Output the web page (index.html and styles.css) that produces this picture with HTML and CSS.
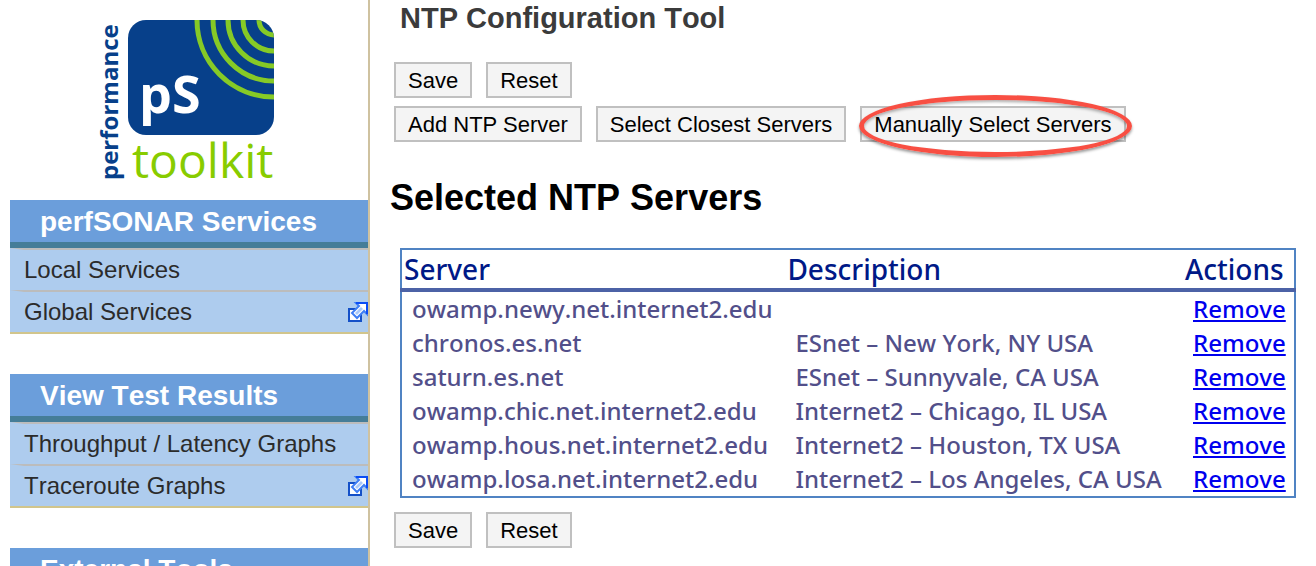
FILE: index.html
```html
<!DOCTYPE html>
<html lang="en">
<head>
<meta charset="utf-8">
<title>NTP Configuration Tool</title>
<link rel="stylesheet" href="styles.css">
</head>
<body>
<div class="page">
  <aside class="sidebar">
    <svg class="logo" viewBox="-20 0 210 200" role="img" aria-label="perfSONAR performance toolkit">
      <defs>
        <clipPath id="badge"><rect x="28" y="20" width="146" height="115" rx="18"/></clipPath>
      </defs>
      <g clip-path="url(#badge)">
        <rect x="28" y="20" width="146" height="115" fill="#07408a"/>
        <g fill="none" stroke="#86ca26" stroke-width="5">
          <circle cx="174" cy="20" r="15"/>
          <circle cx="174" cy="20" r="31"/>
          <circle cx="174" cy="20" r="46"/>
          <circle cx="174" cy="20" r="61"/>
          <circle cx="174" cy="20" r="77"/>
        </g>
      </g>
      <text class="logo-ps" x="39" y="113">pS</text>
      <text class="logo-toolkit" x="32" y="178">toolkit</text>
      <text class="logo-performance" transform="translate(18 180) rotate(-90)">performance</text>
    </svg>
    <nav class="menus">
      <section class="menu">
        <h2 class="menu-title">perfSONAR Services</h2>
        <ul class="menu-list">
          <li class="menu-item"><a class="menu-link" href="#">Local Services</a></li>
          <li class="menu-item"><a class="menu-link" href="#">Global Services
            <svg class="external" viewBox="0 0 20 20" aria-hidden="true"><path d="M1 7H13V19H1Z" fill="#fff" stroke="#1450c8" stroke-width="2"/><path d="M8 1H19V12L16 9L9 16L4 11L11 4Z" fill="#fff" stroke="#3f7ff5" stroke-width="2"/><path d="M8 1H19V12" fill="none" stroke="#0b4df5" stroke-width="2"/><path d="M7 11L13 5L15 7L9 13Z" fill="#a9c9fa"/></svg></a></li>
        </ul>
      </section>
      <section class="menu">
        <h2 class="menu-title">View Test Results</h2>
        <ul class="menu-list">
          <li class="menu-item"><a class="menu-link" href="#">Throughput / Latency Graphs</a></li>
          <li class="menu-item"><a class="menu-link" href="#">Traceroute Graphs
            <svg class="external" viewBox="0 0 20 20" aria-hidden="true"><path d="M1 7H13V19H1Z" fill="#fff" stroke="#1450c8" stroke-width="2"/><path d="M8 1H19V12L16 9L9 16L4 11L11 4Z" fill="#fff" stroke="#3f7ff5" stroke-width="2"/><path d="M8 1H19V12" fill="none" stroke="#0b4df5" stroke-width="2"/><path d="M7 11L13 5L15 7L9 13Z" fill="#a9c9fa"/></svg></a></li>
        </ul>
      </section>
      <section class="menu">
        <h2 class="menu-title">External Tools</h2>
      </section>
    </nav>
  </aside>
  <main class="content">
    <h1 class="title">NTP Configuration Tool</h1>
    <div class="toolbar">
      <div class="buttons">
        <button class="button" type="button">Save</button>
        <button class="button" type="button">Reset</button>
      </div>
      <div class="buttons">
        <button class="button" type="button">Add NTP Server</button>
        <button class="button" type="button">Select Closest Servers</button>
        <span class="highlight"><button class="button" type="button">Manually Select Servers</button></span>
      </div>
    </div>
    <h2 class="subtitle">Selected NTP Servers</h2>
    <table class="servers">
      <thead>
        <tr><th class="col-server">Server</th><th>Description</th><th class="col-actions">Actions</th></tr>
      </thead>
      <tbody>
        <tr><td>owamp.newy.net.internet2.edu</td><td></td><td><a href="#">Remove</a></td></tr>
        <tr><td>chronos.es.net</td><td>ESnet – New York, NY USA</td><td><a href="#">Remove</a></td></tr>
        <tr><td>saturn.es.net</td><td>ESnet – Sunnyvale, CA USA</td><td><a href="#">Remove</a></td></tr>
        <tr><td>owamp.chic.net.internet2.edu</td><td>Internet2 – Chicago, IL USA</td><td><a href="#">Remove</a></td></tr>
        <tr><td>owamp.hous.net.internet2.edu</td><td>Internet2 – Houston, TX USA</td><td><a href="#">Remove</a></td></tr>
        <tr><td>owamp.losa.net.internet2.edu</td><td>Internet2 – Los Angeles, CA USA</td><td><a href="#">Remove</a></td></tr>
      </tbody>
    </table>
    <div class="buttons">
      <button class="button" type="button">Save</button>
      <button class="button" type="button">Reset</button>
    </div>
  </main>
</div>
</body>
</html>
```
FILE: styles.css
```css
* { box-sizing: border-box; }

body {
  margin: 0;
  background: #fff;
  color: #000;
  font-family: "Liberation Sans", Arial, sans-serif;
  font-kerning: none;
}

h1, h2, ul { margin: 0; padding: 0; }

.page {
  display: flex;
  height: 100vh;
  overflow: hidden;
}

/* Sidebar */
.sidebar {
  flex: none;
  width: 370px;
  padding-left: 10px;
  border-right: 2px solid #cfc2a0;
}

.logo {
  display: block;
  width: 210px;
  height: 200px;
  margin-left: 70px;
  font-family: "Open Sans", "Noto Sans", sans-serif;
}

.logo-ps { font-size: 52px; font-weight: 700; fill: #fff; }
.logo-toolkit { font-size: 48px; fill: #88cc00; }
.logo-performance { font-size: 24px; font-weight: 700; fill: #07408a; }

.menus {
  display: flex;
  flex-direction: column;
  gap: 40px;
}

.menu-title {
  padding: 2px 30px 0;
  border-bottom: 6px solid #457d98;
  background: #6b9edb;
  color: #fff;
  font-size: 28px;
  line-height: 40px;
}

.menu-list {
  border-bottom: 2px solid #d1c58c;
  list-style: none;
}

.menu-item {
  border-top: 2px solid #bcbcbc;
  border-left: 14px solid #aeccee;
  background: #aeccee;
}

.menu-link {
  display: flex;
  align-items: center;
  justify-content: space-between;
  color: #2b2b2b;
  font-size: 24px;
  line-height: 40px;
  text-decoration: none;
}

.external { flex: none; width: 20px; height: 20px; }

/* Main column */
.content {
  flex: 1;
  min-width: 0;
  padding: 0 20px 0 24px;
}

.title {
  padding: 2px 6px 28px;
  color: #3b3b3b;
  font-size: 29px;
  line-height: 32px;
}

.toolbar {
  display: flex;
  flex-direction: column;
  gap: 8px;
}

.buttons { display: flex; gap: 14px; }

.button {
  display: block;
  padding: 1px 12px 0;
  border: 2px solid #c0c0c0;
  background: #f4f4f4;
  color: #000;
  font-family: inherit;
  font-size: 22px;
  line-height: 31px;
  white-space: nowrap;
}

/* Hand-drawn style ring round the button being described */
.highlight { position: relative; }

.highlight::after {
  content: "";
  position: absolute;
  inset: -11px -6px -15px -1px;
  border: 5px solid #f84f43;
  border-radius: 50%;
  box-shadow: 0 2px 3px rgba(0, 0, 0, 0.4), inset 0 2px 3px rgba(0, 0, 0, 0.3);
  pointer-events: none;
}

.subtitle {
  margin: 36px 0 30px -4px;
  font-size: 36px;
  line-height: 40px;
}

.servers {
  width: calc(100% - 6px);
  margin: 0 0 14px 6px;
  border: 2px solid #5083c3;
  border-collapse: collapse;
  color: #524f8a;
  font-family: "Noto Sans", "Open Sans", sans-serif;
  font-size: 24px;
  font-weight: 500;
  line-height: 34px;
  white-space: nowrap;
}

.servers th {
  padding: 1px 2px;
  border-bottom: 4px solid #4c62a6;
  color: #001987;
  font-size: 28px;
  font-weight: 500;
  line-height: 36px;
  text-align: left;
}

.servers td { padding: 0 0 0 10px; }
.servers a { color: #0000ee; }

.col-server { width: 43%; }
.col-actions { width: 112px; }
```
